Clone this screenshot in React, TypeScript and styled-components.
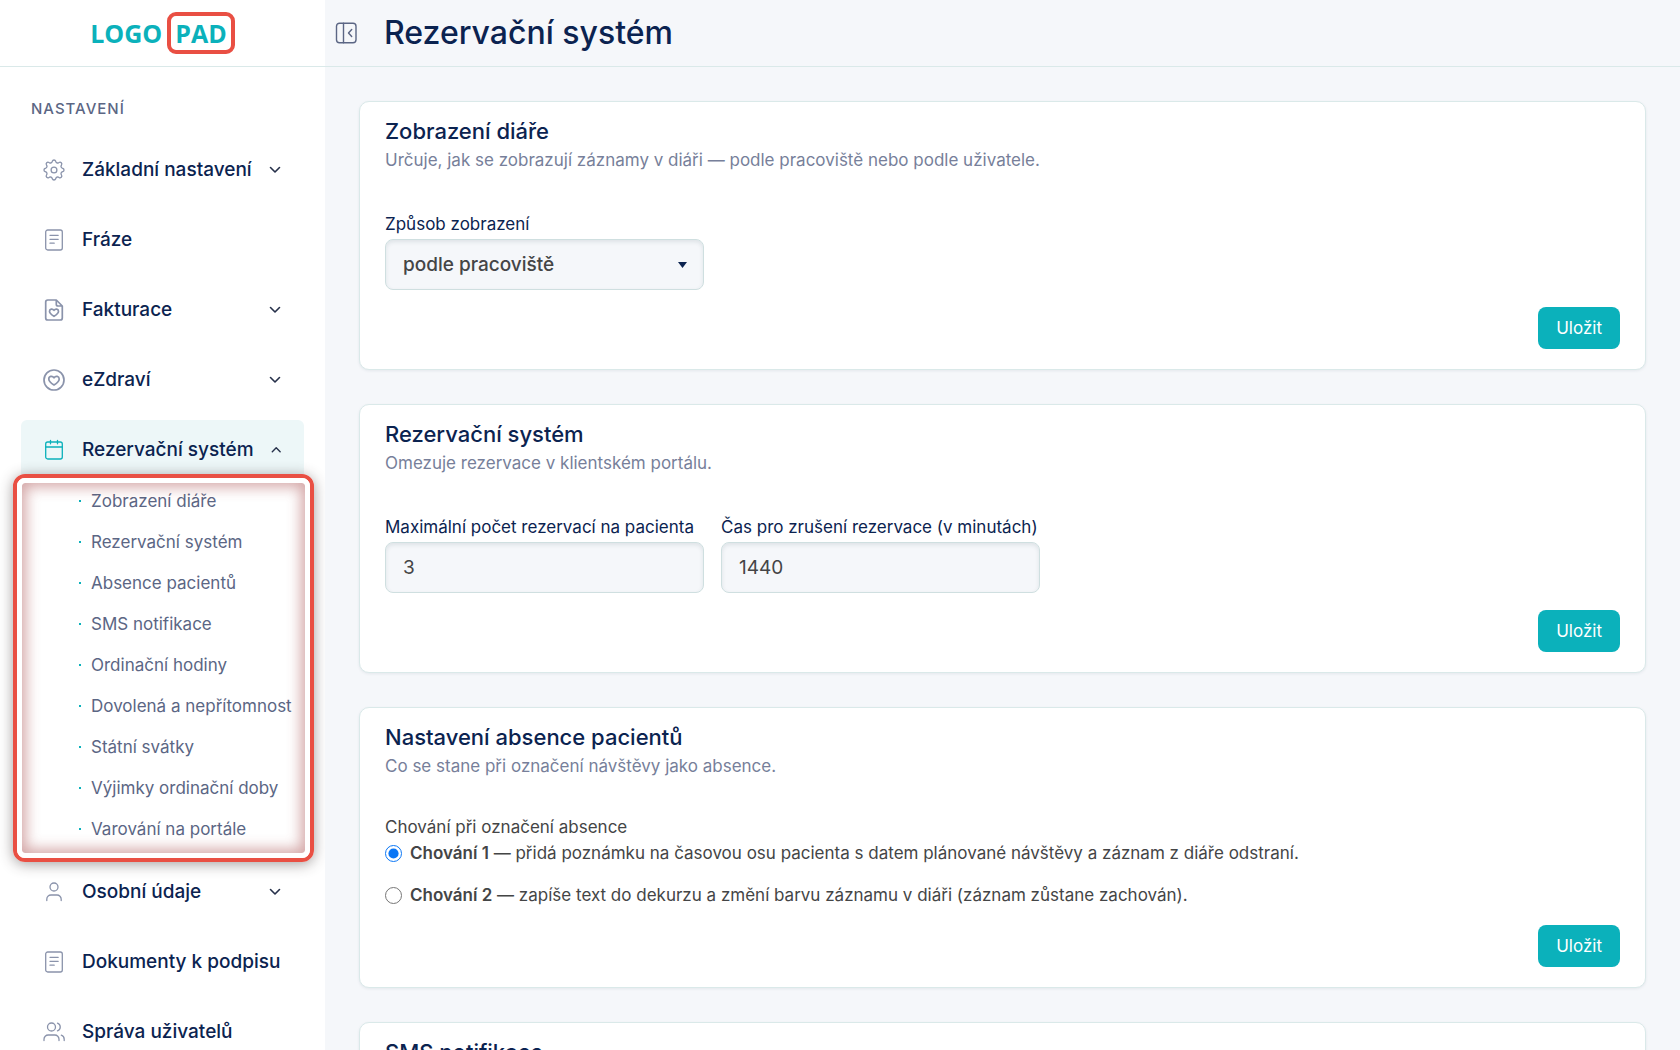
import React, { useState } from "react";
import styled, { createGlobalStyle, css } from "styled-components";

const color = {
  navy: "#0b2350",
  slate: "#5b6684",
  muted: "#777f9a",
  icon: "#8a93ab",
  text: "#444546",
  teal: "#0bb1bb",
  line: "#dae9e9",
  surface: "#f5f7fa",
  red: "#e94f43",
};

const GlobalStyle = createGlobalStyle`
  *, *::before, *::after { box-sizing: border-box; }
  body {
    margin: 0;
    background: ${color.surface};
    color: ${color.text};
    font-family: Inter, "Noto Sans", "Liberation Sans", sans-serif;
    font-size: 17px;
    line-height: 24px;
  }
  h1, h2, p, ul { margin: 0; padding: 0; }
  ul { list-style: none; }
  a { color: inherit; text-decoration: none; }
  button, input, select { font: inherit; }
`;

const Shell = styled.div`
  display: grid;
  grid-template-columns: 325px minmax(0, 1fr);
  height: 100vh;
  overflow: hidden;
`;

const Sidebar = styled.aside`
  background: #fff;
  overflow: hidden;
`;

const LogoBar = styled.div`
  display: flex;
  align-items: center;
  justify-content: center;
  height: 67px;
  border-bottom: 1px solid ${color.line};
`;

const Logo = styled.a`
  display: flex;
  align-items: center;
  gap: 5px;
  color: ${color.teal};
  font-family: "Open Sans", "Noto Sans", sans-serif;
  font-size: 25px;
  font-weight: 700;
  line-height: 34px;
`;

const LogoBox = styled.span`
  padding: 0 4px;
  border: 4px solid ${color.red};
  border-radius: 9px;
`;

const NavHeading = styled.p`
  padding: 30px 31px 19px;
  color: ${color.slate};
  font-size: 15px;
  font-weight: 500;
  letter-spacing: 1px;
`;

const NavList = styled.ul`
  display: flex;
  flex-direction: column;
  gap: 11px;
  padding: 0 21px;
`;

const NavLink = styled.a<{ $active?: boolean }>`
  display: flex;
  align-items: center;
  gap: 17px;
  height: 59px;
  padding: 0 23px 0 22px;
  border-radius: 6px;
  color: ${color.navy};
  font-size: 19px;
  font-weight: 500;
  white-space: nowrap;
  background: ${(p) => (p.$active ? "#edf7f8" : "transparent")};

  > svg:first-child {
    flex: none;
    color: ${(p) => (p.$active ? color.teal : color.icon)};
  }
`;

const NavText = styled.span`
  flex: 1;
`;

const SubMenu = styled.ul`
  position: relative;
  padding: 1px 0 2px 58px;
`;

const SubLink = styled.a`
  display: flex;
  align-items: center;
  gap: 10px;
  height: 41px;
  color: ${color.slate};
  white-space: nowrap;

  &::before {
    content: "";
    width: 2px;
    height: 2px;
    background: ${color.teal};
  }
`;

const Highlight = styled.li`
  position: absolute;
  inset: -5px -10px -11px -8px;
  border: 4px solid ${color.red};
  border-radius: 12px;
  box-shadow: 0 2px 14px rgba(50, 40, 40, 0.45);
  pointer-events: none;

  &::before {
    content: "";
    position: absolute;
    inset: 0;
    border: 5px solid #fff;
    border-radius: 8px;
    box-shadow: inset 0 0 14px 4px rgba(160, 60, 60, 0.45);
  }
`;

const Page = styled.div`
  display: flex;
  flex-direction: column;
  min-height: 0;
`;

const TopBar = styled.header`
  display: flex;
  align-items: center;
  flex: none;
  gap: 26px;
  height: 67px;
  padding: 0 10px;
  border-bottom: 1px solid ${color.line};
`;

const CollapseButton = styled.button`
  display: flex;
  padding: 0;
  border: 0;
  background: none;
  color: ${color.slate};
`;

const PageTitle = styled.h1`
  color: ${color.navy};
  font-size: 32px;
  font-weight: 500;
  line-height: 40px;
`;

const Content = styled.main`
  display: flex;
  flex: 1;
  flex-direction: column;
  gap: 34px;
  min-height: 0;
  padding: 34px;
  overflow-y: auto;
  scrollbar-width: none;
`;

const CardForm = styled.form`
  display: flex;
  flex: none;
  flex-direction: column;
  padding: 14px 25px 20px;
  background: #fff;
  border: 1px solid ${color.line};
  border-radius: 10px;
  box-shadow: 0 1px 3px rgba(20, 50, 80, 0.08);
`;

const CardTitle = styled.h2`
  color: ${color.navy};
  font-size: 22px;
  font-weight: 500;
  line-height: 30px;
`;

const CardText = styled.p`
  color: ${color.muted};
  line-height: 28px;
`;

const Fields = styled.div`
  display: flex;
  gap: 17px;
  margin-top: 38px;
`;

const Field = styled.label`
  display: flex;
  flex-direction: column;
  gap: 3px;
  width: 319px;
  color: ${color.navy};
  white-space: nowrap;
`;

const control = css`
  width: 100%;
  height: 51px;
  padding: 0 17px;
  border: 1px solid #cfdfe0;
  border-radius: 8px;
  outline: 0;
  background: ${color.surface};
  box-shadow: inset 0 2px 4px rgba(20, 50, 60, 0.1);
  color: ${color.text};
  font-size: 19px;
`;

const TextInput = styled.input`
  ${control}
`;

const SelectWrap = styled.span`
  display: grid;
  align-items: center;

  > * {
    grid-area: 1 / 1;
  }
  > svg {
    justify-self: end;
    margin-right: 17px;
    color: ${color.navy};
    pointer-events: none;
  }
`;

const Select = styled.select`
  ${control}
  appearance: none;
  font-weight: 500;
`;

const Options = styled.fieldset`
  min-width: 0;
  margin: 35px 0 0;
  padding: 0;
  border: 0;
`;

const Legend = styled.legend`
  padding: 0;
  line-height: 25px;
`;

const Option = styled.label`
  display: flex;
  align-items: center;
  gap: 8px;
  line-height: 26px;

  & + & {
    margin-top: 16px;
  }
  input {
    flex: none;
    width: 17px;
    height: 17px;
    margin: 0;
    accent-color: #0a76f5;
  }
  strong {
    font-weight: 600;
  }
`;

const SaveButton = styled.button`
  align-self: flex-end;
  height: 42px;
  margin-top: 17px;
  padding: 0 18px;
  border: 0;
  border-radius: 8px;
  background: ${color.teal};
  color: #fff;
`;

type IconName = "gear" | "doc" | "invoice" | "heart" | "calendar" | "user" | "users";

const shapes: Record<IconName, React.ReactNode> = {
  gear: (
    <>
      <path d="M9.3 2.2a1.8 1.8 0 0 1 3.4 0l.2.6a1.8 1.8 0 0 0 2.5 1l.6-.3a1.8 1.8 0 0 1 2.5 2.5l-.3.6a1.8 1.8 0 0 0 1 2.5l.6.2a1.8 1.8 0 0 1 0 3.4l-.6.2a1.8 1.8 0 0 0-1 2.5l.3.6a1.8 1.8 0 0 1-2.5 2.5l-.6-.3a1.8 1.8 0 0 0-2.5 1l-.2.6a1.8 1.8 0 0 1-3.4 0l-.2-.6a1.8 1.8 0 0 0-2.5-1l-.6.3A1.8 1.8 0 0 1 3.5 16l.3-.6a1.8 1.8 0 0 0-1-2.5l-.6-.2a1.8 1.8 0 0 1 0-3.4l.6-.2a1.8 1.8 0 0 0 1-2.5L3.5 6A1.8 1.8 0 0 1 6 3.5l.6.3a1.8 1.8 0 0 0 2.5-1z" />
      <circle cx="11" cy="11" r="2.9" />
    </>
  ),
  doc: (
    <>
      <rect x="2.7" y="1" width="16.6" height="20" rx="2" />
      <path d="M7 6.3h8.2M7 10.3h8.2M7 14.2h4.2" />
    </>
  ),
  invoice: (
    <>
      <path d="M13.3 1H4.7a2 2 0 0 0-2 2v16a2 2 0 0 0 2 2h12.6a2 2 0 0 0 2-2V7zM13.3 1v4.2a1.8 1.8 0 0 0 1.8 1.8h4.2" />
      <path d="M11 17.3c-2.6-1.6-4.5-3-4.5-5.1 0-2.3 3-3 4.500-.9 1.500-2.100 4.500-1.400 4.500.9 0 2.100-1.900 3.500-4.500 5.100z" />
    </>
  ),
  heart: (
    <>
      <circle cx="11" cy="11" r="10" />
      <path d="M11 16c-3-1.900-5.200-3.700-5.200-6.100 0-2.800 3.500-3.600 5.200-1.100 1.700-2.500 5.200-1.700 5.200 1.100 0 2.400-2.200 4.200-5.200 6.100z" />
    </>
  ),
  calendar: (
    <>
      <rect x="2.7" y="3" width="16.6" height="17" rx="2" />
      <path d="M2.7 8h16.6M7.5 1.300v3.500M14.500 1.300v3.500" />
    </>
  ),
  user: (
    <>
      <circle cx="11" cy="6" r="4" />
      <path d="M3.8 19.5v-1.300a4.200 4.200 0 0 1 4.200-4.200h6a4.200 4.200 0 0 1 4.200 4.200v1.300" />
    </>
  ),
  users: (
    <>
      <circle cx="8.500" cy="6" r="4" />
      <path d="M1 19.5v-1.300A4.200 4.200 0 0 1 5.200 14h6.600a4.200 4.200 0 0 1 4.200 4.200v1.300M14.500 2.200a4 4 0 0 1 0 7.600M18.300 14.200a4.200 4.200 0 0 1 2.900 4v1.300" />
    </>
  ),
};

const heavyIcons: IconName[] = ["invoice", "heart"];

const Icon = ({ name }: { name: IconName }) => (
  <svg width="22" height="22" viewBox="0 0 22 22" fill="none" stroke="currentColor" strokeWidth={heavyIcons.includes(name) ? 1.7 : 1.3} strokeLinecap="round" strokeLinejoin="round" aria-hidden="true">
    {shapes[name]}
  </svg>
);

const Chevron = ({ up }: { up?: boolean }) => (
  <svg width="12" height="8" viewBox="0 0 12 8" fill="none" stroke="#26304a" strokeWidth="1.6" strokeLinecap="round" strokeLinejoin="round" aria-hidden="true">
    <path d={up ? "M1.5 6 6 1.5 10.5 6" : "M1.5 1.5 6 6l4.5-4.5"} />
  </svg>
);

const CollapseIcon = () => (
  <svg width="23" height="22" viewBox="0 0 23 22" fill="none" stroke="currentColor" strokeWidth="1.4" strokeLinecap="round" strokeLinejoin="round" aria-hidden="true">
    <rect x="1.5" y="1.2" width="19.5" height="19.5" rx="3" />
    <path d="M8.5 1.2v19.500M16.7 7.500l-3.200 3.500 3.200 3.500" />
  </svg>
);

const subItems = [
  "Zobrazení diáře",
  "Rezervační systém",
  "Absence pacientů",
  "SMS notifikace",
  "Ordinační hodiny",
  "Dovolená a nepřítomnost",
  "Státní svátky",
  "Výjimky ordinační doby",
  "Varování na portále",
];

const navItems: { label: string; icon: IconName; expandable?: boolean; children?: string[] }[] = [
  { label: "Základní nastavení", icon: "gear", expandable: true },
  { label: "Fráze", icon: "doc" },
  { label: "Fakturace", icon: "invoice", expandable: true },
  { label: "eZdraví", icon: "heart", expandable: true },
  { label: "Rezervační systém", icon: "calendar", expandable: true, children: subItems },
  { label: "Osobní údaje", icon: "user", expandable: true },
  { label: "Dokumenty k podpisu", icon: "doc" },
  { label: "Správa uživatelů", icon: "users" },
];

interface CardProps {
  title: string;
  text?: string;
  children?: React.ReactNode;
}

const Card = ({ title, text, children }: CardProps) => (
  <CardForm onSubmit={(e) => e.preventDefault()}>
    <CardTitle>{title}</CardTitle>
    {text && <CardText>{text}</CardText>}
    {children}
    {children && <SaveButton type="submit">Uložit</SaveButton>}
  </CardForm>
);

export default function App() {
  const [view, setView] = useState("podle pracoviště");
  const [limit, setLimit] = useState("3");
  const [minutes, setMinutes] = useState("1440");
  const [absence, setAbsence] = useState(1);

  return (
    <>
      <GlobalStyle />
      <Shell>
        <Sidebar>
          <LogoBar>
            <Logo href="#">
              <span>LOGO</span>
              <LogoBox>PAD</LogoBox>
            </Logo>
          </LogoBar>
          <nav>
            <NavHeading>NASTAVENÍ</NavHeading>
            <NavList>
              {navItems.map((item) => (
                <li key={item.label}>
                  <NavLink href="#" $active={!!item.children}>
                    <Icon name={item.icon} />
                    <NavText>{item.label}</NavText>
                    {item.expandable && <Chevron up={!!item.children} />}
                  </NavLink>
                  {item.children && (
                    <SubMenu>
                      {item.children.map((child) => (
                        <li key={child}>
                          <SubLink href="#">{child}</SubLink>
                        </li>
                      ))}
                      <Highlight aria-hidden="true" />
                    </SubMenu>
                  )}
                </li>
              ))}
            </NavList>
          </nav>
        </Sidebar>
        <Page>
          <TopBar>
            <CollapseButton type="button" aria-label="Sbalit menu">
              <CollapseIcon />
            </CollapseButton>
            <PageTitle>Rezervační systém</PageTitle>
          </TopBar>
          <Content>
            <Card title="Zobrazení diáře" text="Určuje, jak se zobrazují záznamy v diáři — podle pracoviště nebo podle uživatele.">
              <Fields>
                <Field>
                  Způsob zobrazení
                  <SelectWrap>
                    <Select value={view} onChange={(e) => setView(e.target.value)}>
                      <option>podle pracoviště</option>
                      <option>podle uživatele</option>
                    </Select>
                    <svg width="9" height="6" viewBox="0 0 9 6" fill="currentColor" aria-hidden="true">
                      <path d="M0 0h9L4.5 6z" />
                    </svg>
                  </SelectWrap>
                </Field>
              </Fields>
            </Card>
            <Card title="Rezervační systém" text="Omezuje rezervace v klientském portálu.">
              <Fields>
                <Field>
                  Maximální počet rezervací na pacienta
                  <TextInput value={limit} onChange={(e) => setLimit(e.target.value)} />
                </Field>
                <Field>
                  Čas pro zrušení rezervace (v minutách)
                  <TextInput value={minutes} onChange={(e) => setMinutes(e.target.value)} />
                </Field>
              </Fields>
            </Card>
            <Card title="Nastavení absence pacientů" text="Co se stane při označení návštěvy jako absence.">
              <Options>
                <Legend>Chování při označení absence</Legend>
                <Option>
                  <input type="radio" name="absence" checked={absence === 1} onChange={() => setAbsence(1)} />
                  <span>
                    <strong>Chování 1</strong> — přidá poznámku na časovou osu pacienta s datem plánované návštěvy a záznam z diáře odstraní.
                  </span>
                </Option>
                <Option>
                  <input type="radio" name="absence" checked={absence === 2} onChange={() => setAbsence(2)} />
                  <span>
                    <strong>Chování 2</strong> — zapíše text do dekurzu a změní barvu záznamu v diáři (záznam zůstane zachován).
                  </span>
                </Option>
              </Options>
            </Card>
            <Card title="SMS notifikace" />
          </Content>
        </Page>
      </Shell>
    </>
  );
}
